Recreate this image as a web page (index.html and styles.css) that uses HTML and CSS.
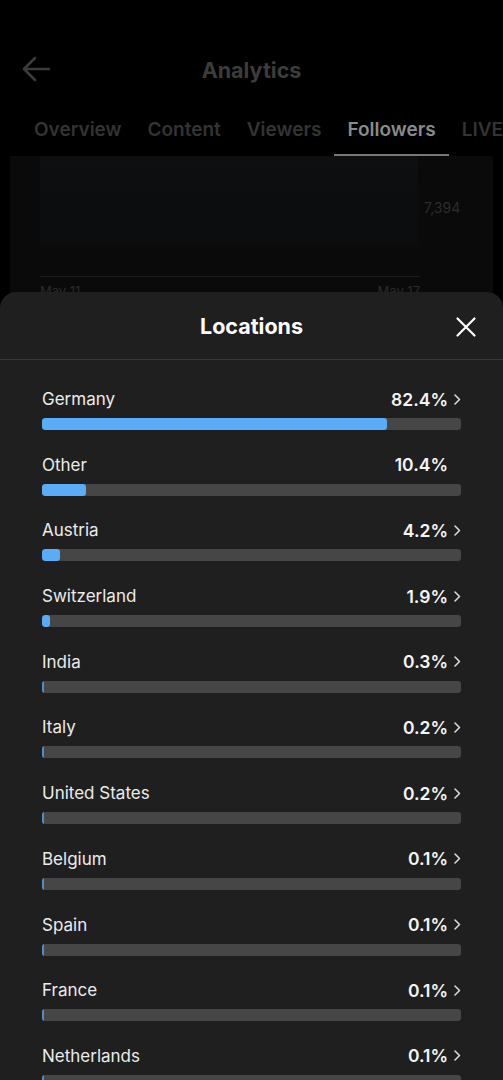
FILE: index.html
```html
<!DOCTYPE html>
<html lang="en">
<head>
<meta charset="utf-8">
<title>Analytics - Locations</title>
<link rel="stylesheet" href="styles.css">
</head>
<body>
<div class="screen">
  <header class="topbar">
    <svg class="back" width="30" height="26" viewBox="0 0 30 26"><path d="M28 13H3M14 2L3 13l11 11" fill="none" stroke="#3b3b3b" stroke-width="2.6" stroke-linecap="round" stroke-linejoin="round"/></svg>
    <h1 class="title">Analytics</h1>
  </header>
  <nav class="tabs">
    <span class="tab">Overview</span>
    <span class="tab">Content</span>
    <span class="tab">Viewers</span>
    <span class="tab active">Followers</span>
    <span class="tab">LIVE</span>
  </nav>
  <section class="chart-card">
    <div class="chart">
      <div class="plot"></div>
      <div class="yval">7,394</div>
    </div>
    <div class="axis-line"></div>
    <div class="xlabels"><span>May 11</span><span>May 17</span></div>
  </section>

  <div class="sheet">
    <div class="sheet-head">
      <h2 class="sheet-title">Locations</h2>
      <svg class="close" width="20" height="20" viewBox="0 0 20 20"><path d="M1.5 1.5l17 17M18.5 1.5l-17 17" stroke="#fff" stroke-width="2.2" stroke-linecap="round"/></svg>
    </div>
    <ul class="list">
      <li class="row"><div class="line"><span class="name">Germany</span><span class="val">82.4%<svg class="chev" width="7" height="11" viewBox="0 0 7 11"><path d="M1 1l4.5 4.5L1 10" fill="none" stroke="#ddd" stroke-width="1.5" stroke-linecap="round" stroke-linejoin="round"/></svg></span></div><div class="track"><div class="fill" style="width:82.4%"></div></div></li>
      <li class="row"><div class="line"><span class="name">Other</span><span class="val">10.4%<svg class="chev hidden" width="7" height="11" viewBox="0 0 7 11"></svg></span></div><div class="track"><div class="fill" style="width:10.4%"></div></div></li>
      <li class="row"><div class="line"><span class="name">Austria</span><span class="val">4.2%<svg class="chev" width="7" height="11" viewBox="0 0 7 11"><path d="M1 1l4.5 4.5L1 10" fill="none" stroke="#ddd" stroke-width="1.5" stroke-linecap="round" stroke-linejoin="round"/></svg></span></div><div class="track"><div class="fill" style="width:4.2%"></div></div></li>
      <li class="row"><div class="line"><span class="name">Switzerland</span><span class="val">1.9%<svg class="chev" width="7" height="11" viewBox="0 0 7 11"><path d="M1 1l4.5 4.5L1 10" fill="none" stroke="#ddd" stroke-width="1.5" stroke-linecap="round" stroke-linejoin="round"/></svg></span></div><div class="track"><div class="fill" style="width:1.9%"></div></div></li>
      <li class="row"><div class="line"><span class="name">India</span><span class="val">0.3%<svg class="chev" width="7" height="11" viewBox="0 0 7 11"><path d="M1 1l4.5 4.5L1 10" fill="none" stroke="#ddd" stroke-width="1.5" stroke-linecap="round" stroke-linejoin="round"/></svg></span></div><div class="track"><div class="fill thin" style="width:0.3%"></div></div></li>
      <li class="row"><div class="line"><span class="name">Italy</span><span class="val">0.2%<svg class="chev" width="7" height="11" viewBox="0 0 7 11"><path d="M1 1l4.5 4.5L1 10" fill="none" stroke="#ddd" stroke-width="1.5" stroke-linecap="round" stroke-linejoin="round"/></svg></span></div><div class="track"><div class="fill thin" style="width:0.2%"></div></div></li>
      <li class="row"><div class="line"><span class="name">United States</span><span class="val">0.2%<svg class="chev" width="7" height="11" viewBox="0 0 7 11"><path d="M1 1l4.5 4.5L1 10" fill="none" stroke="#ddd" stroke-width="1.5" stroke-linecap="round" stroke-linejoin="round"/></svg></span></div><div class="track"><div class="fill thin" style="width:0.2%"></div></div></li>
      <li class="row"><div class="line"><span class="name">Belgium</span><span class="val">0.1%<svg class="chev" width="7" height="11" viewBox="0 0 7 11"><path d="M1 1l4.5 4.5L1 10" fill="none" stroke="#ddd" stroke-width="1.5" stroke-linecap="round" stroke-linejoin="round"/></svg></span></div><div class="track"><div class="fill thin" style="width:0.1%"></div></div></li>
      <li class="row"><div class="line"><span class="name">Spain</span><span class="val">0.1%<svg class="chev" width="7" height="11" viewBox="0 0 7 11"><path d="M1 1l4.5 4.5L1 10" fill="none" stroke="#ddd" stroke-width="1.5" stroke-linecap="round" stroke-linejoin="round"/></svg></span></div><div class="track"><div class="fill thin" style="width:0.1%"></div></div></li>
      <li class="row"><div class="line"><span class="name">France</span><span class="val">0.1%<svg class="chev" width="7" height="11" viewBox="0 0 7 11"><path d="M1 1l4.5 4.5L1 10" fill="none" stroke="#ddd" stroke-width="1.5" stroke-linecap="round" stroke-linejoin="round"/></svg></span></div><div class="track"><div class="fill thin" style="width:0.1%"></div></div></li>
      <li class="row"><div class="line"><span class="name">Netherlands</span><span class="val">0.1%<svg class="chev" width="7" height="11" viewBox="0 0 7 11"><path d="M1 1l4.5 4.5L1 10" fill="none" stroke="#ddd" stroke-width="1.5" stroke-linecap="round" stroke-linejoin="round"/></svg></span></div><div class="track"><div class="fill thin" style="width:0.1%"></div></div></li>
    </ul>
  </div>
</div>
</body>
</html>
```

FILE: styles.css
```css
* { box-sizing: border-box; }
html, body { margin: 0; padding: 0; background: #000; }
body { font-family: Inter, "Noto Sans", "Liberation Sans", sans-serif; }
.screen { position: relative; width: 503px; height: 1080px; overflow: hidden; background: #000; }

.topbar { position: relative; height: 50px; margin-top: 45px; display: flex; align-items: center; justify-content: center; }
.back { position: absolute; left: 21px; top: 11px; }
.title { margin: 0; font-size: 21.5px; font-weight: 700; color: #3c3c3c; }

.tabs { display: flex; margin-top: 15px; padding-left: 21px; height: 46px; white-space: nowrap; }
.tab { padding: 0 13px; font-size: 19px; font-weight: 600; color: #333; line-height: 40px; height: 46px; border-bottom: 2px solid transparent; }
.tab.active { color: #8a8a8a; border-bottom: 2px solid #777; }

.chart-card { margin: 0 10px; height: 160px; background: #0a0a0a; padding: 0 30px; }
.chart { display: flex; height: 120px; }
.plot { width: 378px; height: 89px; background: linear-gradient(#0e0f10, #0b0c0d); }
.yval { margin-left: 6px; margin-top: 43px; font-size: 14px; color: #2c2c2c; }
.axis-line { width: 380px; height: 1px; background: #1c1c1c; }
.xlabels { width: 380px; display: flex; justify-content: space-between; font-size: 13px; color: #2a2a2a; margin-top: 6px; }

.sheet { position: absolute; left: 0; right: 0; top: 292px; bottom: 0; background: #1f1f1f; border-radius: 16px 16px 0 0; }
.sheet-head { position: relative; height: 68px; border-bottom: 1px solid #383838; display: flex; align-items: center; justify-content: center; }
.sheet-title { margin: 0; font-size: 21.5px; font-weight: 700; color: #fff; }
.close { position: absolute; right: 27px; top: 25px; }

.list { list-style: none; margin: 0; padding: 28px 42px 0; }
.row { height: 65.7px; }
.line { display: flex; justify-content: space-between; align-items: center; height: 22px; }
.name { font-size: 17px; color: #ececec; }
.val { display: flex; align-items: center; gap: 6px; font-size: 17.5px; font-weight: 600; color: #f4f4f4; }
.chev.hidden { visibility: hidden; }
.track { margin-top: 8px; height: 12px; background: #464646; border-radius: 3px; overflow: hidden; }
.fill { height: 100%; background: #5aabf8; border-radius: 3px; }
.fill.thin { min-width: 1.5px; border-radius: 0; background: #4f8fc8; }
```
